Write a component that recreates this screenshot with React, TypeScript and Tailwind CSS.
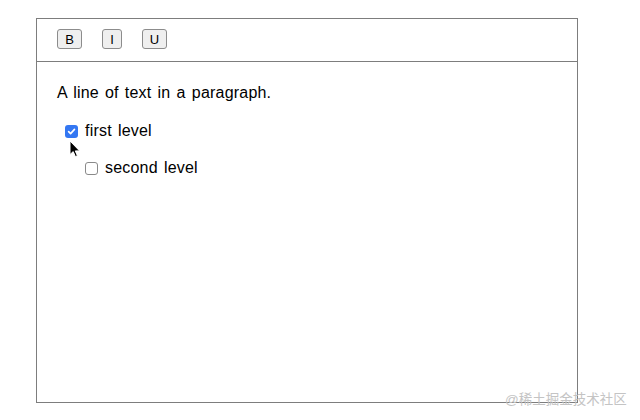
import React from "react";

function Check({ checked }: { checked?: boolean }) {
  return checked ? (
    <span className="flex h-[13px] w-[13px] items-center justify-center rounded-[3px] bg-[#3477f2]">
      <svg width="9" height="9" viewBox="0 0 10 10">
        <path d="M1.8 5.2 L4 7.4 L8.3 2.6" fill="none" stroke="#fff" strokeWidth="1.8" strokeLinecap="round" strokeLinejoin="round" />
      </svg>
    </span>
  ) : (
    <span className="block h-[13px] w-[13px] rounded-[3px] border border-[#8a8a8a] bg-white" />
  );
}

export default function App() {
  const btn =
    "h-[20px] rounded-[3px] border border-[#8c8c8c] bg-[#efefef] text-[13px] font-normal leading-none text-black flex items-center justify-center";
  return (
    <div className="relative h-[420px] w-[640px] bg-white pl-[36px] pt-[18px]" style={{ fontFamily: '"Liberation Sans", Arial, sans-serif' }}>
      <div className="flex h-[385px] w-[542px] flex-col border border-[#7d7d7d]">
        <div className="flex h-[43px] items-start gap-[20px] border-b border-[#7d7d7d] pl-[20px] pt-[10px]">
          <button className={btn + " w-[25px]"}>B</button>
          <button className={btn + " w-[20px]"}>I</button>
          <button className={btn + " w-[25px]"}>U</button>
        </div>
        <div className="flex flex-col pl-[20px] pt-[21px] text-[16px] leading-[20px] text-black tracking-[0.2px] [word-spacing:1.5px]">
          <p>A line of text in a paragraph.</p>
          <div className="mt-[18px] flex items-center gap-[7px] pl-[8px]">
            <Check checked />
            <span>first level</span>
          </div>
          <div className="mt-[17px] flex items-center gap-[7px] pl-[28px]">
            <Check />
            <span>second level</span>
          </div>
        </div>
      </div>
      <svg className="absolute left-[69px] top-[140px]" width="12" height="18" viewBox="0 0 12 18">
        <path d="M1 1 L1 14.5 L4.2 11.6 L6.4 16.6 L8.4 15.7 L6.3 10.9 L10.6 10.9 Z" fill="#000" stroke="#fff" strokeWidth="1" strokeLinejoin="round" />
      </svg>
      <div
        className="absolute left-[505px] top-[391px] text-[13.5px] leading-[18px] text-[#c4c4c4]"
        style={{ fontFamily: '"Liberation Sans", "Noto Sans CJK SC", sans-serif' }}
      >
        @稀土掘金技术社区
      </div>
    </div>
  );
}
